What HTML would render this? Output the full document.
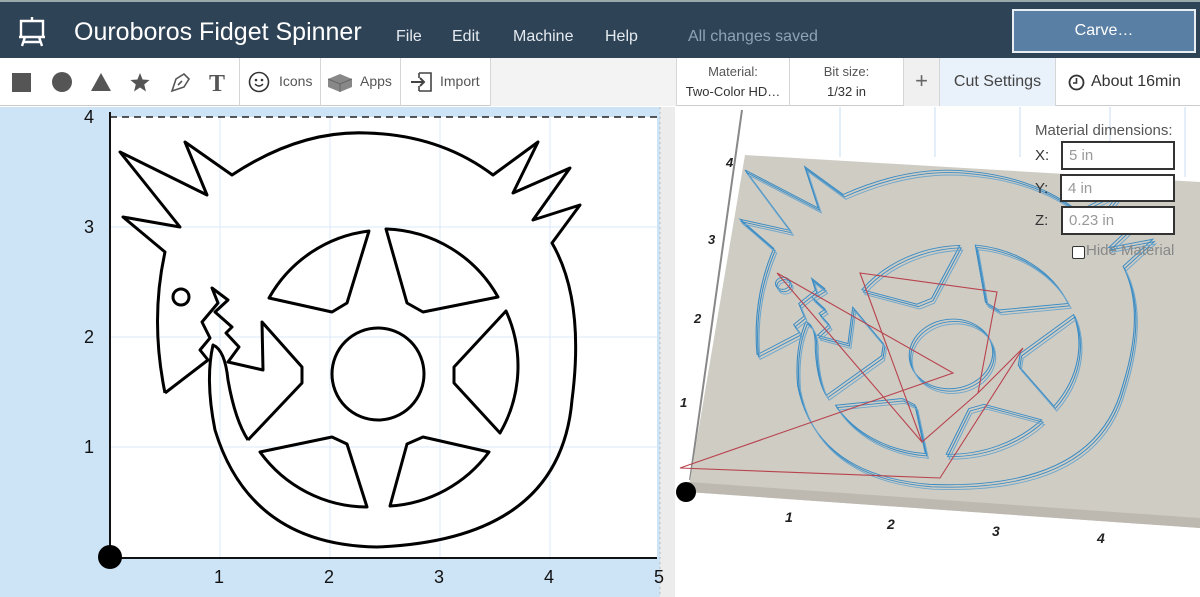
<!DOCTYPE html>
<html><head><meta charset="utf-8"><style>
*{margin:0;padding:0;box-sizing:border-box}
body{width:1200px;height:597px;overflow:hidden;font-family:"Liberation Sans",sans-serif;background:#fff;position:relative}
.hdr{position:absolute;left:0;top:0;width:1200px;height:58px;background:#2f4356;border-top:2px solid #9aa}
.hdr span{position:absolute;color:#e4eaf0;font-size:16px;top:26px}
.tb{position:absolute;left:0;top:58px;width:1200px;height:48px;background:#fff;border-bottom:1px solid #ccc}
.sec{position:absolute;top:0;height:48px;border-right:1px solid #d6d6d6;color:#555;font-size:14px}
.ax{position:absolute;font-size:18px;color:#111}
.l3{position:absolute;font-size:13px;font-style:italic;font-weight:bold;color:#222}
</style></head><body>
<div class="hdr">
<svg style="position:absolute;left:18px;top:14px" width="28" height="32" viewBox="0 0 28 32" fill="none" stroke="#fff" stroke-width="2.4"><path d="M14 1v4M3 5h22v16H3zM1 21h26M7 21l-3 9M21 21l3 9M5 26h18"/></svg>
<span style="left:74px;top:16px;font-size:25px;color:#fff">Ouroboros Fidget Spinner</span>
<span style="left:396px">File</span><span style="left:452px">Edit</span><span style="left:513px">Machine</span><span style="left:605px">Help</span>
<span style="left:688px;color:#8ea3b6">All changes saved</span>
<div style="position:absolute;left:1012px;top:7px;width:184px;height:44px;background:#5a7fa5;border:2px solid #e8eef4;color:#fff;font-size:16px;text-align:center;line-height:40px">Carve…</div>
</div>
<div class="tb">
<div class="sec" style="left:0;width:240px">
<svg width="240" height="48"><rect x="12" y="15" width="19" height="19" fill="#555"/><circle cx="62" cy="24" r="10" fill="#555"/><path d="M101 15l10 18H91z" fill="#555"/><path d="M140 15l2.6 6.5 7 .5-5.4 4.5 1.8 7-6-4-6 4 1.8-7-5.4-4.5 7-.5z" fill="#555"/><path d="M172 33l4-12 8-5 5 5-5 8zM178 27l4-4" stroke="#555" stroke-width="1.6" fill="none"/><text x="209" y="33" font-family="Liberation Serif" font-size="24" font-weight="bold" fill="#555">T</text></svg></div>
<div class="sec" style="left:240px;width:81px"><svg style="position:absolute;left:8px;top:13px" width="22" height="22"><circle cx="11" cy="11" r="9.5" fill="none" stroke="#333" stroke-width="1.6"/><circle cx="8" cy="9" r="1.3" fill="#333"/><circle cx="14" cy="9" r="1.3" fill="#333"/><path d="M7 13q4 4 8 0" stroke="#333" stroke-width="1.4" fill="none"/></svg><span style="position:absolute;left:39px;top:15px">Icons</span></div>
<div class="sec" style="left:321px;width:80px"><svg style="position:absolute;left:6px;top:13px" width="26" height="22"><path d="M1 8l12-5 12 5v8l-12 5-12-5z" fill="#888"/><path d="M1 8l12 5 12-5M13 13v8" stroke="#666" fill="none"/></svg><span style="position:absolute;left:39px;top:15px">Apps</span></div>
<div class="sec" style="left:401px;width:90px"><svg style="position:absolute;left:8px;top:13px" width="24" height="22" fill="none" stroke="#444" stroke-width="1.6"><path d="M10 2h12v18H10M10 2v5M10 15v5"/><path d="M2 11h13M11 7l4 4-4 4" stroke-width="2"/></svg><span style="position:absolute;left:39px;top:15px">Import</span></div>
<div style="position:absolute;left:491px;top:0;width:185px;height:48px;background:#f3f3f3"></div>
<div class="sec" style="left:676px;width:114px;border-left:1px solid #d6d6d6;text-align:center;font-size:13px;line-height:20px;padding-top:4px">Material:<br><span style="color:#333">Two-Color HD…</span></div>
<div class="sec" style="left:790px;width:114px;text-align:center;font-size:13px;line-height:20px;padding-top:4px">Bit size:<br><span style="color:#333">1/32 in</span></div>
<div class="sec" style="left:904px;width:36px;background:#f0f0f0;text-align:center;font-size:22px;line-height:46px;color:#666">+</div>
<div class="sec" style="left:940px;width:116px;background:#e9f2fb;text-align:center;font-size:16px;line-height:48px;color:#444">Cut Settings</div>
<div class="sec" style="left:1056px;width:144px;font-size:16px;line-height:48px;color:#333;border:none"><svg style="position:absolute;left:12px;top:16px" width="17" height="17"><circle cx="8.5" cy="8.5" r="7" fill="none" stroke="#333" stroke-width="1.8"/><path d="M8.5 4v5H5" stroke="#333" stroke-width="1.6" fill="none"/></svg><span style="position:absolute;left:35px">About 16min</span></div>
</div>
<svg width="0" height="0" style="position:absolute"><defs>
<g id="shape">
<path d="M165 393Q150 320 165 252L123 217L180 227L120 152L207 195L185 142L232 175Q300 130 367 133Q440 135 493 175L538 142L513 193L570 168L533 220L580 205L552 243Q585 300 572 400Q560 540 377 547Q250 545 215 430Q205 380 213 345Q225 350 228 380Q235 420 248 440"/>
<path d="M165 393L208 360L200 350L210 338L202 322L218 303L212 288L228 300L215 312L232 327L226 333L239 347L228 362L263 370L262 322L302 367L302 383L248 440"/>
<circle cx="181" cy="297" r="8"/>
<circle cx="378" cy="374" r="46"/>
<path d="M269 298A133 133 0 0 1 369 231L347 303L332 312Z"/>
<path d="M386 229A133 133 0 0 1 498 297L423 312L407 303Z"/>
<path d="M506 311A133 133 0 0 1 500 433L454 383L454 367Z"/>
<path d="M489 452A133 133 0 0 1 390 506L407 444L423 437Z"/>
<path d="M367 507A133 133 0 0 1 260 452L332 437L347 444Z"/>
</g></defs></svg>
<div style="position:absolute;left:0;top:107px;width:660px;height:490px;background:#cde4f7"></div>
<svg style="position:absolute;left:0;top:107px" width="675" height="490">
<g transform="translate(0,-107)">
<rect x="110" y="117" width="547" height="440" fill="#fff"/>
<g stroke="#dbe9f7" stroke-width="1"><path d="M220 117v440M330 117v440M440 117v440M550 117v440M110 227h547M110 337h547M110 447h547"/></g>
<path d="M110 117h547" stroke="#222" stroke-width="1.5" stroke-dasharray="7 5"/>
<path d="M110 112v446h547" stroke="#111" stroke-width="2" fill="none"/>
<circle cx="110" cy="557" r="12" fill="#000"/>
<rect x="660" y="107" width="15" height="490" fill="#ececec"/>
<path d="M660 107v490" stroke="#bbb" stroke-dasharray="2 3"/>
<use href="#shape" fill="none" stroke="#000" stroke-width="3" stroke-linejoin="round"/>
</g></svg>
<div class="ax" style="left:84px;top:107px">4</div><div class="ax" style="left:84px;top:217px">3</div><div class="ax" style="left:84px;top:327px">2</div><div class="ax" style="left:84px;top:437px">1</div>
<div class="ax" style="left:214px;top:567px">1</div><div class="ax" style="left:324px;top:567px">2</div><div class="ax" style="left:434px;top:567px">3</div><div class="ax" style="left:544px;top:567px">4</div><div class="ax" style="left:654px;top:567px">5</div>
<svg style="position:absolute;left:675px;top:107px" width="525" height="490">
<g transform="translate(-675,-107)">
<rect x="675" y="107" width="525" height="490" fill="#fff"/>
<g stroke="#e3eef8" stroke-width="2"><path d="M840 107v50M935 107v50M1020 107v50M1110 107v60M1185 107v70"/></g>
<path d="M742 110L690 480" stroke="#888" stroke-width="2"/>
<path d="M745 155L1200 182V528L688 492Z" fill="#cfccc4"/>
<path d="M688 482L1200 518V528L688 492Z" fill="#bdb9b1"/>
<circle cx="686" cy="492" r="10" fill="#000"/>
<g transform="matrix(0.9,0.0636,-0.1182,0.7545,655,47.7)" fill="none" stroke="#3a8cc4" stroke-width="1.2">
<use href="#shape"/>
<use href="#shape" transform="translate(2,3)"/>
<use href="#shape" transform="translate(4,6)" stroke="#6fa7cc"/>
</g>
<g fill="none" stroke="#b8434d" stroke-width="1.1">
<path d="M777 273L953 373L680 468L940 478L1023 348L978 393M860 273L997 292L978 393L922 442ZM777 273L922 442"/>
</g>
</g></svg>
<div class="l3" style="left:726px;top:155px">4</div>
<div class="l3" style="left:708px;top:232px">3</div>
<div class="l3" style="left:694px;top:311px">2</div>
<div class="l3" style="left:680px;top:395px">1</div>
<div class="l3" style="left:785px;top:509px;font-size:14px">1</div>
<div class="l3" style="left:887px;top:516px;font-size:14px">2</div>
<div class="l3" style="left:992px;top:523px;font-size:14px">3</div>
<div class="l3" style="left:1097px;top:530px;font-size:14px">4</div>
<div style="position:absolute;left:1035px;top:122px;font-size:15px;color:#555">Material dimensions:</div>
<div style="position:absolute;left:1035px;top:147px;font-size:15px;color:#333">X:</div>
<div style="position:absolute;left:1035px;top:180px;font-size:15px;color:#333">Y:</div>
<div style="position:absolute;left:1035px;top:212px;font-size:15px;color:#333">Z:</div>
<div style="position:absolute;left:1061px;top:141px;width:114px;height:29px;border:2px solid #333;background:#fff;color:#999;font-size:15px;padding:4px 6px">5 in</div>
<div style="position:absolute;left:1060px;top:174px;width:115px;height:28px;border:2px solid #333;background:#fff;color:#999;font-size:15px;padding:4px 6px">4 in</div>
<div style="position:absolute;left:1061px;top:206px;width:114px;height:29px;border:2px solid #333;background:#fff;color:#999;font-size:15px;padding:4px 6px">0.23 in</div>
<div style="position:absolute;left:1072px;top:246px;width:13px;height:13px;border:1.5px solid #333;border-radius:2px;background:#fff"></div>
<div style="position:absolute;left:1086px;top:242px;font-size:15px;color:#888">Hide Material</div>
</body></html>
